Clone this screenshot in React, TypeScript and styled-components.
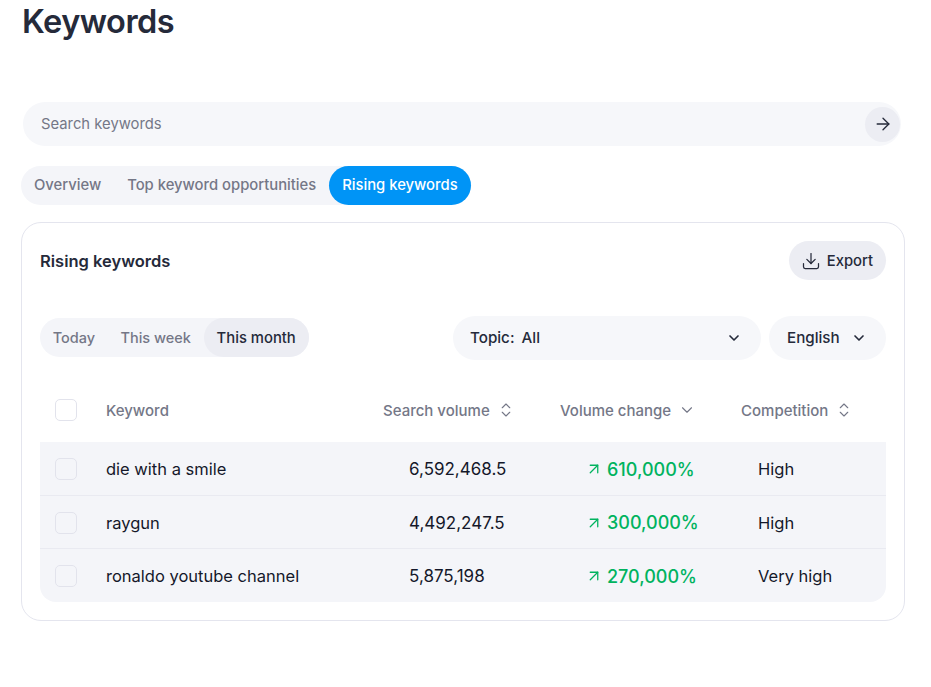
import React from "react";
import styled, { createGlobalStyle } from "styled-components";
import { ArrowRight, ArrowUpRight, ChevronDown, ChevronsUpDown, Download } from "lucide-react";

const GlobalStyle = createGlobalStyle`
  body {
    margin: 0;
    background: #fff;
    font-family: "Inter", "Liberation Sans", sans-serif;
    color: #252a3a;
  }
`;

const Page = styled.div`
  width: 931px;
  height: 687px;
  box-sizing: border-box;
  padding: 0 26px 0 21px;
  overflow: hidden;
`;

const Title = styled.h1`
  margin: 0 0 0 1px;
  height: 102px;
  font-size: 32.5px;
  line-height: 44px;
  font-weight: 600;
  letter-spacing: -0.5px;
  color: #252a3a;
`;

const SearchBar = styled.div`
  display: flex;
  align-items: center;
  justify-content: space-between;
  width: 878px;
  height: 44px;
  margin-left: 2px;
  box-sizing: border-box;
  padding: 0 1px 0 18px;
  border-radius: 22px;
  background: #f6f7fa;
  font-size: 14.8px;
  color: #747787;
`;

const RoundButton = styled.button`
  display: flex;
  align-items: center;
  justify-content: center;
  width: 35px;
  height: 35px;
  padding: 0;
  border: 0;
  border-radius: 50%;
  background: #ecedf3;
  color: #252a3a;
`;

const Tabs = styled.div`
  display: inline-flex;
  align-items: center;
  height: 39px;
  margin-top: 20px;
  border-radius: 20px;
  background: #f4f5f9;
`;

const Tab = styled.div<{ $active?: boolean }>`
  display: flex;
  align-items: center;
  height: 38px;
  padding: 0 13px 1px;
  border-radius: 20px;
  font-size: 14.8px;
  font-weight: 500;
  color: ${(p) => (p.$active ? "#fff" : "#747787")};
  background: ${(p) => (p.$active ? "#0094f6" : "transparent")};
`;

const Card = styled.section`
  width: 884px;
  height: 399px;
  margin-top: 17px;
  box-sizing: border-box;
  padding: 18px 18px 0;
  border: 1px solid #e4e5ee;
  border-radius: 20px;
`;

const CardHeader = styled.div`
  display: flex;
  align-items: center;
  justify-content: space-between;
  height: 39px;
`;

const CardTitle = styled.h2`
  margin: 0;
  font-size: 16.5px;
  font-weight: 600;
  color: #252a3a;
`;

const ExportButton = styled.button`
  display: flex;
  align-items: center;
  gap: 6px;
  height: 39px;
  padding: 0 13px 0 12px;
  border: 0;
  border-radius: 20px;
  background: #ecedf3;
  font-family: inherit;
  font-size: 14.8px;
  font-weight: 500;
  color: #252a3a;
`;

const Filters = styled.div`
  display: flex;
  align-items: flex-start;
  justify-content: space-between;
  margin-top: 36px;
`;

const Periods = styled.div`
  display: flex;
  height: 39px;
  margin-top: 2px;
  border-radius: 20px;
  background: #f4f5f9;
`;

const Period = styled.div<{ $active?: boolean }>`
  display: flex;
  align-items: center;
  padding: 0 ${(p) => (p.$active ? 13 : 12.7)}px;
  border-radius: 20px;
  font-size: ${(p) => (p.$active ? 14.8 : 14.5)}px;
  font-weight: 500;
  color: ${(p) => (p.$active ? "#252a3a" : "#747787")};
  background: ${(p) => (p.$active ? "#ecedf3" : "transparent")};
`;

const Selects = styled.div`
  display: flex;
  gap: 8px;
`;

const Select = styled.div<{ $width: number; $inset: number }>`
  display: flex;
  align-items: center;
  justify-content: space-between;
  width: ${(p) => p.$width}px;
  height: 44px;
  box-sizing: border-box;
  padding: 0 19px 1px ${(p) => p.$inset}px;
  border-radius: 22px;
  background: #f6f7fa;
  font-size: 15.2px;
  font-weight: 500;
  word-spacing: 3px;
  color: #252a3a;
`;

const columns = "66px 277px 177px 181px 1fr";

const HeadRow = styled.div`
  display: grid;
  grid-template-columns: ${columns};
  align-items: center;
  height: 60px;
  padding-bottom: 2px;
  margin-top: 20px;
  font-size: 15px;
  font-weight: 500;
  color: #747787;
`;

const HeadCell = styled.div`
  display: flex;
  align-items: center;
  gap: 7px;
`;

const Rows = styled.div`
  overflow: hidden;
  border-radius: 0 0 16px 16px;
  background: #f4f5f9;
`;

const Row = styled.div`
  display: grid;
  grid-template-columns: ${columns};
  align-items: center;
  height: 53px;
  padding-top: 1px;
  border-bottom: 1px solid #e9eaf1;
  box-sizing: border-box;
  font-size: 16.5px;
  color: #14182a;

  &:first-child {
    height: 54px;
  }

  &:last-child {
    border-bottom: 0;
  }
`;

const CheckCell = styled.div`
  display: flex;
  padding-left: 15px;
`;

const Checkbox = styled.span`
  width: 22px;
  height: 22px;
  box-sizing: border-box;
  border: 1px solid #e2e3ec;
  border-radius: 5px;
`;

const Volume = styled.div`
  padding-left: 26px;
  font-size: 17px;
`;

const Change = styled.div`
  display: flex;
  align-items: center;
  gap: 4px;
  padding-left: 25px;
  font-size: 18px;
  font-weight: 500;
  color: #00b35f;
`;

const Competition = styled.div`
  padding-left: 17px;
`;

const rows = [
  { keyword: "die with a smile", volume: "6,592,468.5", change: "610,000%", competition: "High" },
  { keyword: "raygun", volume: "4,492,247.5", change: "300,000%", competition: "High" },
  { keyword: "ronaldo youtube channel", volume: "5,875,198", change: "270,000%", competition: "Very high" },
];

export default function App() {
  return (
    <Page>
      <GlobalStyle />
      <Title>Keywords</Title>
      <SearchBar>
        Search keywords
        <RoundButton>
          <ArrowRight size={20} strokeWidth={1.6} />
        </RoundButton>
      </SearchBar>
      <Tabs>
        <Tab>Overview</Tab>
        <Tab>Top keyword opportunities</Tab>
        <Tab $active>Rising keywords</Tab>
      </Tabs>
      <Card>
        <CardHeader>
          <CardTitle>Rising keywords</CardTitle>
          <ExportButton>
            <Download size={20} strokeWidth={1.5} />
            Export
          </ExportButton>
        </CardHeader>
        <Filters>
          <Periods>
            <Period>Today</Period>
            <Period>This week</Period>
            <Period $active>This month</Period>
          </Periods>
          <Selects>
            <Select $width={308} $inset={17}>
              Topic: All
              <ChevronDown size={16} strokeWidth={2.5} />
            </Select>
            <Select $width={117} $inset={18}>
              English
              <ChevronDown size={16} strokeWidth={2.5} />
            </Select>
          </Selects>
        </Filters>
        <HeadRow>
          <CheckCell>
            <Checkbox />
          </CheckCell>
          <HeadCell>Keyword</HeadCell>
          <HeadCell>
            Search volume
            <ChevronsUpDown size={18} strokeWidth={1.5} />
          </HeadCell>
          <HeadCell>
            Volume change
            <ChevronDown size={18} strokeWidth={1.5} />
          </HeadCell>
          <HeadCell>
            Competition
            <ChevronsUpDown size={18} strokeWidth={1.5} />
          </HeadCell>
        </HeadRow>
        <Rows>
          {rows.map((row) => (
            <Row key={row.keyword}>
              <CheckCell>
                <Checkbox />
              </CheckCell>
              <div>{row.keyword}</div>
              <Volume>{row.volume}</Volume>
              <Change>
                <ArrowUpRight size={18} strokeWidth={1.7} />
                {row.change}
              </Change>
              <Competition>{row.competition}</Competition>
            </Row>
          ))}
        </Rows>
      </Card>
    </Page>
  );
}
